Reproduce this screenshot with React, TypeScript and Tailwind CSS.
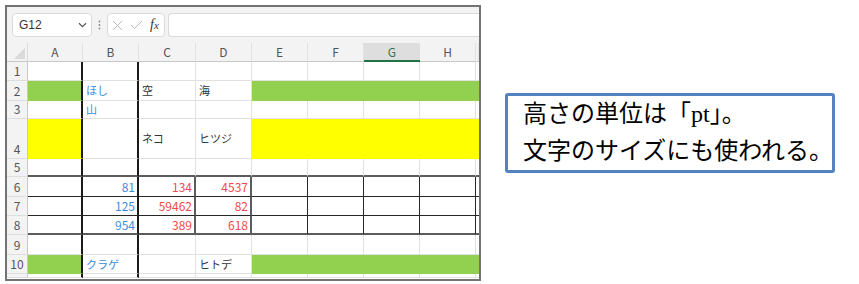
import React from "react";

const colKeys = ["A", "B", "C", "D", "E", "F", "G", "H", ""];

const rowHeights = [
  "h-[19px]",
  "h-[20px]",
  "h-[18px]",
  "h-[40px]",
  "h-[18px]",
  "h-[20px]",
  "h-[19px]",
  "h-[19px]",
  "h-[20px]",
  "h-[19px]",
  "h-[4px]",
];

type Cell = { t: string; c: "blue" | "red" | "black"; right?: boolean };

const cells: Record<string, Cell> = {
  B2: { t: "ほし", c: "blue" },
  C2: { t: "空", c: "black" },
  D2: { t: "海", c: "black" },
  B3: { t: "山", c: "blue" },
  C4: { t: "ネコ", c: "black" },
  D4: { t: "ヒツジ", c: "black" },
  B6: { t: "81", c: "blue", right: true },
  C6: { t: "134", c: "red", right: true },
  D6: { t: "4537", c: "red", right: true },
  B7: { t: "125", c: "blue", right: true },
  C7: { t: "59462", c: "red", right: true },
  D7: { t: "82", c: "red", right: true },
  B8: { t: "954", c: "blue", right: true },
  C8: { t: "389", c: "red", right: true },
  D8: { t: "618", c: "red", right: true },
  B10: { t: "クラゲ", c: "blue" },
  D10: { t: "ヒトデ", c: "black" },
};

const fillOf = (r: number, ci: number) => {
  if (![0, 4, 5, 6, 7, 8].includes(ci)) return "";
  if (r === 2 || r === 10) return "g";
  if (r === 4) return "y";
  return "";
};

const cellClass = (r: number, ci: number) => {
  const f = fillOf(r, ci);
  const band = r >= 6 && r <= 8;
  let right = "";
  if (ci === 0 || ci === 1) right = "border-r-2 border-r-[#1a1a1a]";
  else if (band && (ci === 2 || ci === 3)) right = "border-r-2 border-r-[#5c5c5c]";
  else if (band && ci >= 4 && ci <= 7) right = "border-r border-r-[#262626]";
  else if (ci === 8) right = "";
  else if (f === "g") right = "border-r border-r-[#92d050]";
  else if (f === "y") right = "border-r border-r-[#ffff00]";
  else right = "border-r border-r-[#e1e1e1]";

  let bottom = "";
  if (r === 5 || r === 8) bottom = "border-b-2 border-b-[#5c5c5c]";
  else if (r === 6 || r === 7) bottom = "border-b border-b-[#262626]";
  else if (f === "g") bottom = "border-b border-b-[#92d050]";
  else if (f === "y") bottom = "border-b border-b-[#ffff00]";
  else bottom = "border-b border-b-[#e1e1e1]";

  const bg = f === "g" ? "bg-[#92d050]" : f === "y" ? "bg-[#ffff00]" : "bg-white";
  return `${right} ${bottom} ${bg}`;
};

const textColor = { blue: "text-[#3a8edb]", red: "text-[#f24a4a]", black: "text-[#333333]" };

const Toolbar = () => (
  <div className="h-[36px] shrink-0 bg-[#f3f3f3] flex items-start pt-[6px] pl-[5px]">
    <div className="w-[80px] h-[24px] bg-white border border-[#dadada] rounded-[4px] flex items-center justify-between pl-[6px] pr-[3px]">
      <span className="text-[12px] text-[#333] font-['Liberation_Sans',sans-serif]">G12</span>
      <svg width="9" height="6" viewBox="0 0 9 6" className="mr-[1px]">
        <path d="M1 1.2 L4.5 4.6 L8 1.2" stroke="#555" strokeWidth="1.2" fill="none" />
      </svg>
    </div>
    <div className="w-[15px] h-[24px] flex items-center justify-center">
      <svg width="3" height="10" viewBox="0 0 3 10">
        <circle cx="1.5" cy="1.5" r="0.9" fill="#8a8a8a" />
        <circle cx="1.5" cy="5" r="0.9" fill="#8a8a8a" />
        <circle cx="1.5" cy="8.5" r="0.9" fill="#8a8a8a" />
      </svg>
    </div>
    <div className="w-[58px] h-[24px] bg-white border border-[#dadada] rounded-[4px] flex items-center pl-[4px] gap-[7px]">
      <svg width="11" height="11" viewBox="0 0 11 11">
        <path d="M1 1 L10 10 M10 1 L1 10" stroke="#b8b8b8" strokeWidth="1" fill="none" />
      </svg>
      <svg width="13" height="10" viewBox="0 0 13 10">
        <path d="M1 5 L4.5 8.5 L12 1" stroke="#b8b8b8" strokeWidth="1" fill="none" />
      </svg>
      <span className="italic text-[14px] leading-none text-[#333] font-['Liberation_Serif',serif] -mt-[1px]">
        f<span className="text-[11px]">x</span>
      </span>
    </div>
    <div className="ml-[3px] flex-1 h-[24px] bg-white border border-[#dadada] border-r-0 rounded-l-[4px]" />
  </div>
);

const Sheet = () => (
  <div className="grid grid-cols-[21px_55px_56px_57px_56px_56px_56px_56px_56px_3px] font-['Noto_Sans_CJK_JP',sans-serif]">
    <div className="h-[19px] bg-[#f3f3f3] border-b border-b-[#c8c8c8] border-r border-r-[#dcdcdc] relative overflow-hidden">
      <div className="absolute right-[2px] bottom-[2px] w-0 h-0 border-l-[11px] border-l-transparent border-b-[11px] border-b-[#dadada]" />
    </div>
    {colKeys.map((k, ci) =>
      k === "G" ? (
        <div
          key={ci}
          className="h-[19px] bg-[#dedede] border-b-2 border-b-[#217346] flex items-center justify-center text-[12px] text-[#3f6f57]"
        >
          {k}
        </div>
      ) : (
        <div
          key={ci}
          className="h-[19px] bg-[#f3f3f3] border-b border-b-[#c8c8c8] border-r border-r-[#e2e2e2] flex items-center justify-center text-[12px] text-[#555]"
        >
          {k}
        </div>
      )
    )}
    {rowHeights.map((h, ri) => {
      const r = ri + 1;
      return (
        <React.Fragment key={r}>
          <div
            className={`${h} bg-[#f3f3f3] border-r border-r-[#c8c8c8] border-b border-b-[#dedede] flex items-end justify-center pb-[1px] text-[12px] leading-[16px] text-[#555] overflow-hidden`}
          >
            {r < 11 ? r : ""}
          </div>
          {colKeys.map((k, ci) => {
            const cell = k ? cells[`${k}${r}`] : undefined;
            return (
              <div
                key={ci}
                className={`${h} ${cellClass(r, ci)} flex items-center overflow-hidden ${
                  cell?.right ? "justify-end pr-[2px]" : "justify-start pl-[3px]"
                }`}
              >
                {cell && (
                  <span className={`${cell.right ? "text-[12px]" : "text-[11px]"} leading-none ${textColor[cell.c]}`}>
                    {cell.t}
                  </span>
                )}
              </div>
            );
          })}
        </React.Fragment>
      );
    })}
  </div>
);

export default function App() {
  return (
    <div className="w-[859px] h-[284px] bg-white flex items-start overflow-hidden">
      <div className="ml-[5px] mt-[5px] w-[476px] h-[276px] border-2 border-[#737373] overflow-hidden bg-white flex flex-col">
        <Toolbar />
        <Sheet />
      </div>
      <div className="ml-[24px] mt-[93px] w-[330px] h-[80px] border-[3px] border-[#5482be] rounded-[3px] bg-white pl-[15px] whitespace-nowrap overflow-hidden font-['Liberation_Serif','Noto_Sans_CJK_JP',serif] text-[24px] leading-[37px] text-black">
        <div>高さの単位は「pt」。</div>
        <div>文字のサイズにも使われる。</div>
      </div>
    </div>
  );
}
